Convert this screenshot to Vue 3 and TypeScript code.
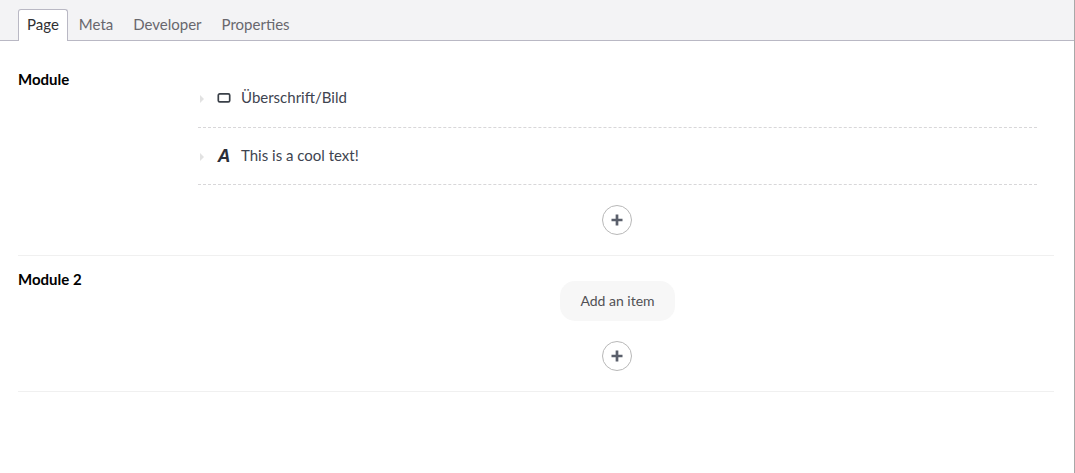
<script setup lang="ts">
interface ModuleItem {
  id: number
  label: string
  icon: 'box' | 'text'
}

const tabs = ['Page', 'Meta', 'Developer', 'Properties']

const items: ModuleItem[] = [
  { id: 1, label: 'Überschrift/Bild', icon: 'box' },
  { id: 2, label: 'This is a cool text!', icon: 'text' },
]
</script>

<template>
  <div class="editor">
    <nav class="tabs">
      <a v-for="(tab, i) in tabs" :key="tab" class="tab" :class="{ active: i === 0 }">{{ tab }}</a>
    </nav>

    <main class="content">
      <section class="module first">
        <h3 class="module-label">Module</h3>
        <div class="module-body">
          <ul class="item-list">
            <li v-for="item in items" :key="item.id" class="item">
              <span class="caret"></span>
              <span class="item-icon">
                <svg v-if="item.icon === 'box'" width="14" height="12" viewBox="0 0 14 12">
                  <rect x="1.3" y="1.9" width="11.4" height="8" rx="1.4" fill="none" stroke="#3a4048" stroke-width="1.7" />
                </svg>
                <span v-else class="glyph-a">A</span>
              </span>
              <span class="item-name">{{ item.label }}</span>
            </li>
          </ul>
          <div class="add-row">
            <button class="add-btn" type="button">
              <svg width="12" height="12" viewBox="0 0 12 12">
                <path d="M6 .5v11M.5 6h11" fill="none" stroke="#5a5f6b" stroke-width="2.7" />
              </svg>
            </button>
          </div>
        </div>
      </section>

      <section class="module second">
        <h3 class="module-label">Module 2</h3>
        <div class="module-body centered">
          <div class="empty-pill">Add an item</div>
          <div class="add-row">
            <button class="add-btn" type="button">
              <svg width="12" height="12" viewBox="0 0 12 12">
                <path d="M6 .5v11M.5 6h11" fill="none" stroke="#5a5f6b" stroke-width="2.7" />
              </svg>
            </button>
          </div>
        </div>
      </section>
    </main>
  </div>
</template>

<style>
html,
body {
  margin: 0;
  background: #fff;
}
</style>

<style scoped>
.editor {
  height: 473px;
  box-sizing: border-box;
  border-right: 1px solid #a8a8a8;
  font-family: Lato, "Noto Sans", sans-serif;
  font-size: 15px;
  line-height: 20px;
  color: #3e4450;
  overflow: hidden;
}

.tabs {
  height: 40px;
  display: flex;
  align-items: flex-end;
  padding-left: 18px;
  background: #f3f3f5;
  border-bottom: 1px solid #b9b8c4;
}

.tab {
  height: 30px;
  line-height: 28px;
  padding: 0 10px 0 9px;
  color: #68676d;
  border: 1px solid transparent;
  border-bottom: none;
  margin-right: -1px;
}

.tab.active {
  height: 31px;
  margin-bottom: -1px;
  padding: 0 8px;
  margin-right: 1px;
  background: #fff;
  color: #303033;
  border-color: #b9b8c4;
  border-radius: 3px 3px 0 0;
}

.content {
  padding: 14px 20px 0 18px;
}

.module {
  display: flex;
  border-bottom: 1px solid #f0f0f0;
}

.module.first {
  height: 200px;
}

.module.second {
  height: 135px;
}

.module-label {
  width: 180px;
  flex-shrink: 0;
  margin: 0;
  font-size: 15px;
  font-weight: 700;
  line-height: 20px;
  color: #000;
}

.first .module-label {
  padding-top: 14px;
}

.second .module-label {
  padding-top: 13px;
}

.module-body {
  flex: 1;
  padding-right: 17px;
}

.first .module-body {
  padding-top: 16px;
}

.item-list {
  list-style: none;
  margin: 0;
  padding: 0;
}

.item {
  display: flex;
  align-items: center;
  height: 52px;
  padding-bottom: 4px;
  border-bottom: 1px dashed #d8d7d9;
}

.item:nth-child(2) {
  height: 54px;
  padding-bottom: 2px;
}

.caret {
  width: 0;
  height: 0;
  margin: 3px 0 0 2px;
  border-left: 4px solid #e2e2e2;
  border-top: 4px solid transparent;
  border-bottom: 4px solid transparent;
}

.item-icon {
  width: 14px;
  height: 16px;
  margin: 1px 0 0 13px;
  display: flex;
  align-items: center;
  justify-content: center;
}

.glyph-a {
  font-family: "Liberation Sans", sans-serif;
  font-size: 18px;
  font-weight: 700;
  font-style: italic;
  color: #2b2f38;
}

.item-name {
  margin-left: 10px;
}

.add-row {
  display: flex;
  justify-content: center;
  padding-top: 20px;
}

.add-btn {
  width: 30px;
  height: 30px;
  margin-right: 1px;
  padding: 0;
  box-sizing: border-box;
  display: flex;
  align-items: center;
  justify-content: center;
  background: #fff;
  border: 1px solid #b8b8b8;
  border-radius: 50%;
}

.centered {
  display: flex;
  flex-direction: column;
  align-items: center;
  padding-top: 25px;
}

.empty-pill {
  width: 115px;
  height: 40px;
  line-height: 40px;
  text-align: center;
  font-size: 14px;
  border-radius: 15px;
  background: #f7f7f7;
  color: #515054;
}
</style>
